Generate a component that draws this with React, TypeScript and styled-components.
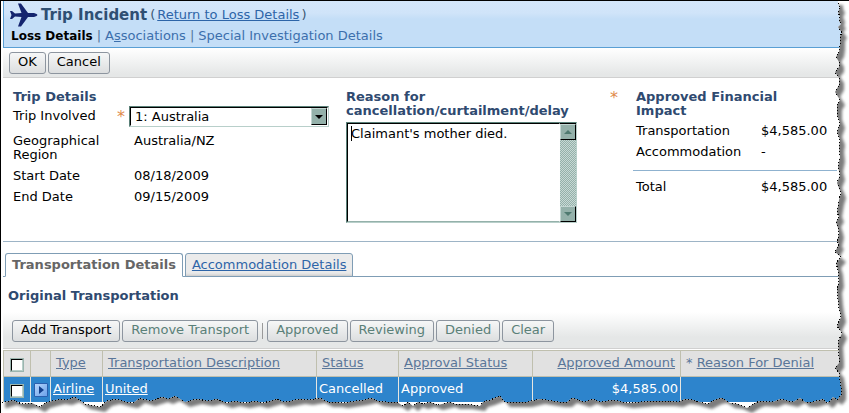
import React from "react";
import styled, { createGlobalStyle, css } from "styled-components";

const GlobalStyle = createGlobalStyle`
  *, *::before, *::after { box-sizing: border-box; }
  html, body { margin: 0; background: #fff; }
  body, button, select, textarea {
    font-family: "DejaVu Sans", Verdana, sans-serif;
    font-size: 13px;
    line-height: 14px;
    color: #000;
  }
  body { overflow-x: hidden; }
`;

const Sheet = styled.div`
  position: relative;
  padding: 0 0 11px 2px;
  border-top: 1px solid #000;
  border-left: 1px solid #000;
  overflow: hidden;
`;

const Header = styled.header`
  border-left: 1px solid #5a9fd4;
  border-bottom: 1px solid #5a9fd4;
  background: linear-gradient(#d3e6fa 0, #d0e4f9 12px, #c4def7 18px, #c4def7 100%);
  height: 47px;
  padding: 2px 5px 0;
`;

const TitleRow = styled.div`
  display: flex;
  align-items: center;
  height: 24px;
  gap: 3px;
  color: #3b5773;
`;

const Title = styled.h1`
  margin: 0;
  font-size: 15px;
  line-height: 24px;
  font-weight: bold;
  color: #2f4f73;
`;

const ReturnLink = styled.span`
  display: flex;
  gap: 2px;
`;

const Link = styled.a`
  color: #2e65a8;
  text-decoration: underline;
`;

const Nav = styled.nav`
  display: flex;
  gap: 4px;
  padding-left: 2px;
  line-height: 18px;
  color: #55779c;
`;

const NavLink = styled.a<{ $current?: boolean }>`
  color: #3c6fac;
  text-decoration: none;
  ${(p) => p.$current && css`color: #000; font-weight: bold; font-size: 12px;`}
`;

const Toolbar = styled.div<{ $tall?: boolean }>`
  display: flex;
  align-items: center;
  gap: 2px;
  height: ${(p) => (p.$tall ? "37px" : "30px")};
  padding: ${(p) => (p.$tall ? "2px 9px 0" : "0 6px")};
  border-bottom: 1px solid #d0d0d0;
  background: linear-gradient(#fff, #e5e7e7 ${(p) => (p.$tall ? "70%" : "90%")});
`;

const Button = styled.button`
  height: 22px;
  padding: 0 8px 2px;
  border: 1px solid #8d959f;
  border-radius: 3px;
  background: linear-gradient(#f6f7f7, #dcdedf);
  white-space: nowrap;
  &:disabled { color: #5a8078; }
`;

const Separator = styled.span`
  width: 1px;
  height: 16px;
  margin: 0 2px;
  background: #9a9a9a;
`;

const Details = styled.section`
  display: grid;
  grid-template-columns: 316px 231px minmax(190px, 1fr);
  column-gap: 17px;
  min-height: 164px;
  padding: 12px 12px 17px 10px;
  border-bottom: 1px solid #9db4c6;
`;

const Heading = styled.h2`
  margin: 0;
  font-size: 13px;
  line-height: 14px;
  font-weight: bold;
  color: #2f4a70;
`;

const TripFields = styled.div`
  display: grid;
  grid-template-columns: 103px 13px 200px;
  grid-auto-rows: min-content;
  row-gap: 7px;
`;

const TripHeading = styled(Heading)`
  grid-column: 1 / -1;
  margin-bottom: -5px;
`;

const Label = styled.label`
  padding-top: 3px;
  line-height: 14px;
`;

const Caption = styled.span`
  grid-column: 1 / 3;
  line-height: 14px;
`;

const Value = styled.span`
  padding-left: 5px;
`;

const Star = styled.span`
  color: #e08a4a;
  line-height: 21px;
  padding-left: 1px;
  font-size: 16px;
`;

const SelectFrame = styled.div`
  display: flex;
  position: relative;
  height: 21px;
  border: 1px solid;
  border-color: #5a8078 #b8cfca #b8cfca #5a8078;
`;

const Select = styled.select`
  appearance: none;
  flex: 1;
  min-width: 0;
  padding: 0 20px 0 4px;
  border: 1px solid;
  border-color: #000 #fff #fff #000;
  border-radius: 0;
  background: #fff;
  outline: none;
`;

const bevel = css`
  border: 1px solid;
  border-color: #c3d6d2 #000 #000 #c3d6d2;
  background: #94b1aa;
`;

const SelectArrow = styled.span`
  ${bevel}
  position: absolute;
  top: 1px;
  right: 1px;
  width: 16px;
  height: 17px;
  display: grid;
  place-items: center;
  pointer-events: none;
`;

const Reason = styled.div`
  display: flex;
  flex-direction: column;
  align-items: stretch;
`;

const ReasonLabel = styled.label`
  font-weight: bold;
  color: #2f4a70;
  height: 32px;
`;

const TextFrame = styled.div`
  display: flex;
  height: 101px;
  border: 1px solid;
  border-color: #5a8078 #b8cfca #b8cfca #5a8078;
`;

const TextArea = styled.textarea`
  flex: 1;
  min-width: 0;
  resize: none;
  overflow: hidden;
  outline: none;
  padding: 3px;
  border: 1px solid;
  border-color: #000 transparent #94b1aa #000;
  background: linear-gradient(#000, #000) 3px 2px / 1px 15px no-repeat #fff;
`;

const ScrollTrack = styled.div`
  display: flex;
  flex-direction: column;
  justify-content: space-between;
  width: 16px;
  border-top: 1px solid #000;
  background: repeating-conic-gradient(#94b1aa 0 25%, #c8d9d5 0 50%) 0 0 / 2px 2px;
`;

const ScrollButton = styled.button`
  ${bevel}
  display: grid;
  place-items: center;
  height: 16px;
  padding: 0;
`;

const Impact = styled.div`
  display: grid;
  grid-template-columns: 23px 1fr;
  padding-left: 16px;
`;

const ImpactStar = styled(Star)`
  padding-left: 0;
  margin-top: -3px;
`;

const ImpactBody = styled.div``;

const ImpactTable = styled.table`
  width: 100%;
  margin-top: 2px;
  border-collapse: separate;
  border-spacing: 0;
  th, td { height: 21px; padding: 0; text-align: left; font-weight: normal; vertical-align: middle; }
  th { width: 128px; padding-left: 3px; }
  tfoot th, tfoot td { height: 32px; border-top: 1px solid #8fb2cf; }
  tbody tr:last-child th, tbody tr:last-child td { height: 29px; padding-bottom: 7px; }
`;

const ImpactHeading = styled(Heading)`
  width: 160px;
  padding-left: 3px;
`;

const Tabs = styled.div`
  display: flex;
  gap: 2px;
  margin-top: 11px;
  padding-left: 2px;
  border-bottom: 1px solid #7f9db5;
`;

const Tab = styled.button<{ $active?: boolean }>`
  height: 24px;
  margin-bottom: -1px;
  padding: 0 6px;
  border: 1px solid #7f9db5;
  border-radius: 3px 3px 0 0;
  background: #ebebeb;
  box-shadow: inset 0 -4px 3px -3px #c4c4c4;
  color: #2e65a8;
  text-decoration: underline;
  white-space: nowrap;
  ${(p) => p.$active && css`
    background: #fff;
    border-bottom-color: #fff;
    box-shadow: none;
    color: #666;
    font-weight: bold;
    text-decoration: none;
  `}
`;

const ListHeading = styled(Heading)`
  padding: 12px 5px 9px;
`;

const Grid = styled.table`
  width: 100%;
  margin-top: 1px;
  border-collapse: separate;
  border-spacing: 0;
  border-top: 1px solid #bfbfae;
  border-left: 1px solid #bfbfae;
  table-layout: fixed;
`;

const HeadCell = styled.th<{ $right?: boolean; $tight?: boolean }>`
  height: 26px;
  padding: ${(p) => (p.$tight ? "0 2px 2px" : "0 5px 2px")};
  border-right: 1px solid #bfbfae;
  border-bottom: 1px solid #bfbfae;
  background: #e1e1e1;
  color: #5a7699;
  font-weight: normal;
  text-align: ${(p) => (p.$right ? "right" : "left")};
  white-space: nowrap;
  a { color: inherit; }
`;

const Cell = styled.td<{ $right?: boolean }>`
  height: 25px;
  padding: 0 2px 2px;
  border-right: 1px solid #e6e6e0;
  background: #2d84cc;
  color: #fff;
  text-align: ${(p) => (p.$right ? "right" : "left")};
  white-space: nowrap;
  a { color: inherit; }
`;

const Check = styled.input`
  appearance: none;
  display: block;
  width: 12px;
  height: 12px;
  margin: 4px 0 0 5px;
  background: #fff;
  border: 1px solid;
  border-color: #000 #b8cfca #b8cfca #000;
  box-shadow: 0 0 0 1px #9bb5af;
`;

const OpenButton = styled.button`
  display: grid;
  place-items: center;
  width: 14px;
  height: 14px;
  margin: 2px 0 0 1px;
  padding: 0;
  border: 1px solid #2a5fae;
  border-radius: 1px;
  background: linear-gradient(135deg, #b5d4fb, #6ba2ea);
`;

const TornEdge = styled.svg`
  position: absolute;
  inset: -1px 0 0 -1px;
  width: calc(100% + 1px);
  height: calc(100% + 1px);
  pointer-events: none;
`;

const edge =
  "838,0 838,4 840,8 838,12 840,17 839,21 841,24 838,27 842,33 840,36 840,45 839,52 836,57 839,62 839,67 835,72 839,78 839,85 835,92 840,100 837,105 837,115 840,123 837,132 840,140 839,147 840,157 838,167 840,175 837,183 841,193 839,200 837,212 839,217 836,222 838,228 839,233 837,242 839,244 835,252 841,257 836,263 838,270 839,282 837,288 838,300 839,308 841,317 837,326 842,333 838,342 839,357 839,363 835,368 839,373 841,387 841,395 837,400 833,397 830,401 827,403 823,399 813,402 805,402 800,398 793,402 780,399 773,402 760,401 755,403 747,408 738,404 730,403 722,398 717,399 707,404 693,400 685,399 678,402 670,401 650,401 640,402 628,403 613,400 600,402 592,399 585,402 572,398 567,402 560,402 540,399 527,402 505,402 500,396 490,400 483,402 480,406 467,404 455,404 450,402 438,405 430,402 423,404 418,402 413,406 408,402 403,406 397,402 387,402 378,401 372,398 363,400 343,403 337,402 328,402 320,398 308,400 300,399 290,401 283,402 277,399 263,403 255,401 245,403 235,401 227,403 217,399 208,401 197,399 185,402 175,396 168,399 163,397 150,401 140,398 133,403 127,402 115,399 107,401 100,407 85,404 75,397 67,400 60,399 52,401 45,403 40,407 32,403 22,404 12,400 2,403 0,403";

const Torn = () => (
  <TornEdge viewBox="0 0 849 413" preserveAspectRatio="none" aria-hidden="true">
    <defs>
      <clipPath id="outside">
        <path clipRule="evenodd" d={`M0,0 H849 V413 H0 Z M0,0 L${edge} Z`} />
      </clipPath>
      <filter id="soft" x="-5%" y="-5%" width="110%" height="110%">
        <feGaussianBlur stdDeviation="1.6" />
      </filter>
    </defs>
    <g clipPath="url(#outside)">
      <rect width="849" height="413" fill="#fff" />
      <polygon points={`8,8 ${edge}`} transform="translate(5 5)" fill="#7c7c7c" filter="url(#soft)" />
    </g>
    <polyline points={edge} fill="none" stroke="#000" strokeDasharray="1 2" shapeRendering="crispEdges" />
  </TornEdge>
);

const Plane = () => (
  <svg width="29" height="24" viewBox="0 0 29 24" aria-hidden="true">
    <path
      fill="#14246e"
      d="M1 8 L3 8 L6 10.500 L12.500 10 L9 0.500 L12 0.500 L19 10 L25 10 Q28.500 11 28.500 12 Q28.500 13 25 14 L19 14 L12 23.500 L9 23.500 L12.500 14 L6 13.500 L3 16 L1 16 L2.500 12 Z"
    />
  </svg>
);

const Triangle = ({ up, color }: { up?: boolean; color: string }) => (
  <svg width="8" height="4" viewBox="0 0 8 4" aria-hidden="true">
    <path d={up ? "M0 4 L4 0 L8 4 Z" : "M0 0 L8 0 L4 4 Z"} fill={color} />
  </svg>
);

const columnWidths = [27, 20, 52, 214, 82, 134, 148];

export default function App() {
  return (
    <>
      <GlobalStyle />
      <Sheet>
        <Header>
          <TitleRow>
            <Plane />
            <Title>Trip Incident</Title>
            <ReturnLink>
              (<Link href="#loss">Return to Loss Details</Link>)
            </ReturnLink>
          </TitleRow>
          <Nav>
            <NavLink $current href="#details">Loss Details</NavLink>|
            <NavLink href="#associations">A<u>s</u>sociations</NavLink>|
            <NavLink href="#special">Special Investigation Details</NavLink>
          </Nav>
        </Header>
        <Toolbar>
          <Button>OK</Button>
          <Button>Cancel</Button>
        </Toolbar>
        <Details>
          <TripFields>
            <TripHeading>Trip Details</TripHeading>
            <Label htmlFor="trip">Trip Involved</Label>
            <Star>*</Star>
            <SelectFrame>
              <Select id="trip">
                <option>1: Australia</option>
              </Select>
              <SelectArrow><Triangle color="#000" /></SelectArrow>
            </SelectFrame>
            <Caption>Geographical<br />Region</Caption>
            <Value>Australia/NZ</Value>
            <Caption>Start Date</Caption>
            <Value>08/18/2009</Value>
            <Caption>End Date</Caption>
            <Value>09/15/2009</Value>
          </TripFields>
          <Reason>
            <ReasonLabel htmlFor="reason">Reason for cancellation/curtailment/delay</ReasonLabel>
            <TextFrame>
              <TextArea id="reason" defaultValue="Claimant's mother died." />
              <ScrollTrack>
                <ScrollButton aria-label="Scroll up"><Triangle up color="#4f7a70" /></ScrollButton>
                <ScrollButton aria-label="Scroll down"><Triangle color="#4f7a70" /></ScrollButton>
              </ScrollTrack>
            </TextFrame>
          </Reason>
          <Impact>
            <ImpactStar>*</ImpactStar>
            <ImpactBody>
              <ImpactHeading>Approved Financial Impact</ImpactHeading>
              <ImpactTable>
                <tbody>
                  <tr><th scope="row">Transportation</th><td>$4,585.00</td></tr>
                  <tr><th scope="row">Accommodation</th><td>-</td></tr>
                </tbody>
                <tfoot>
                  <tr><th scope="row">Total</th><td>$4,585.00</td></tr>
                </tfoot>
              </ImpactTable>
            </ImpactBody>
          </Impact>
        </Details>
        <Tabs role="tablist">
          <Tab role="tab" aria-selected $active>Transportation Details</Tab>
          <Tab role="tab">Accommodation Details</Tab>
        </Tabs>
        <ListHeading>Original Transportation</ListHeading>
        <Toolbar $tall>
          <Button>Add Transport</Button>
          <Button disabled>Remove Transport</Button>
          <Separator />
          <Button disabled>Approved</Button>
          <Button disabled>Reviewing</Button>
          <Button disabled>Denied</Button>
          <Button disabled>Clear</Button>
        </Toolbar>
        <Grid>
          <colgroup>
            {columnWidths.map((w, i) => <col key={i} width={w} />)}
            <col />
          </colgroup>
          <thead>
            <tr>
              <HeadCell $tight><Check type="checkbox" aria-label="Select all" /></HeadCell>
              <HeadCell />
              <HeadCell><a href="#type">Type</a></HeadCell>
              <HeadCell><a href="#description">Transportation Description</a></HeadCell>
              <HeadCell><a href="#status">Status</a></HeadCell>
              <HeadCell><a href="#approval">Approval Status</a></HeadCell>
              <HeadCell $right><a href="#amount">Approved Amount</a></HeadCell>
              <HeadCell>* <a href="#denial">Reason For Denial</a></HeadCell>
            </tr>
          </thead>
          <tbody>
            <tr>
              <Cell><Check type="checkbox" aria-label="Select Airline" /></Cell>
              <Cell>
                <OpenButton aria-label="Open row">
                  <svg width="5" height="8" viewBox="0 0 5 8" aria-hidden="true"><path d="M0 0 L5 4 L0 8 Z" fill="#123f8c" /></svg>
                </OpenButton>
              </Cell>
              <Cell><a href="#airline">Airline</a></Cell>
              <Cell><a href="#united">United</a></Cell>
              <Cell>Cancelled</Cell>
              <Cell>Approved</Cell>
              <Cell $right>$4,585.00</Cell>
              <Cell />
            </tr>
          </tbody>
        </Grid>
        <Torn />
      </Sheet>
    </>
  );
}
